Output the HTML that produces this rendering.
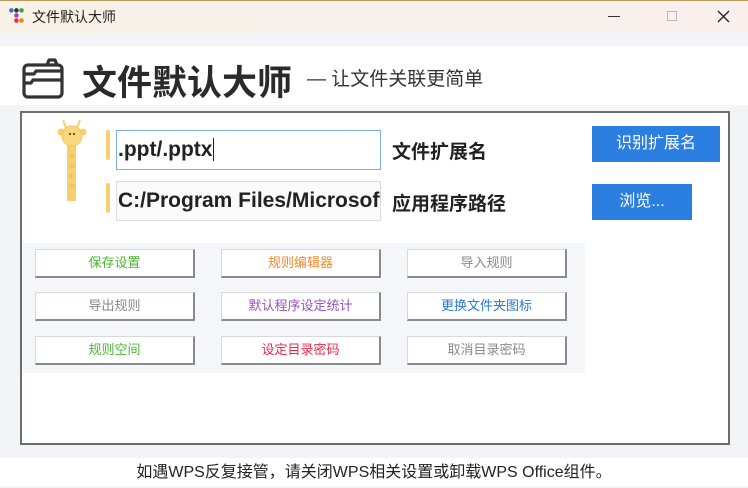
<!DOCTYPE html>
<html><head><meta charset="utf-8"><style>
*{margin:0;padding:0;box-sizing:border-box}
body{width:748px;height:486px;overflow:hidden;position:relative;background:#f3f4f8;font-family:"Liberation Sans","Noto Sans CJK SC",sans-serif}
.abs{position:absolute}
.tb{left:0;top:0;width:748px;height:34px;background:linear-gradient(90deg,#f7f1e8,#f9f0ee);border-top:1px solid #b89a5a}
.hd{left:0;top:46px;width:748px;height:59px;background:#fff}
.box{left:20px;top:111px;width:710px;height:334px;background:#fff;border:2px solid #6d6d6d}
.panel{left:23px;top:243px;width:562px;height:130px;background:#f5f6f9}
.btn{position:absolute;width:160px;height:29px;background:#fff;border:1px solid #d8d8d8;border-right:2px solid #8a8a8a;border-bottom:2px solid #8a8a8a;font-size:13px;text-align:center;line-height:26px}
.inp{position:absolute;left:116px;width:265px;height:40px;border:1px solid #dcdcdc;background:#fafafa;font-size:21px;font-weight:bold;color:#222;line-height:38px;padding-left:1px;overflow:hidden;white-space:nowrap}
.lab{position:absolute;left:392px;font-size:19px;font-weight:bold;color:#222}
.bb{position:absolute;background:#2b7fe0;color:#fff;font-size:16px;text-align:center;line-height:36px;height:36px}
.bar{position:absolute;left:106px;width:4px;height:30px;background:#f7cf70;border-radius:2px}
.bt{left:0;top:458px;width:748px;height:28px;background:#fff;font-size:16px;color:#222;text-align:center;line-height:30px}
</style></head><body>
<div class="abs tb"></div>
<svg class="abs" style="left:8px;top:7px" width="18" height="18" viewBox="0 0 16 16">
<circle cx="3" cy="3" r="2" fill="#3a6fd8"/><circle cx="7.5" cy="3" r="2" fill="#333"/><circle cx="12" cy="3" r="2" fill="#2aa84a"/>
<circle cx="7.5" cy="7.5" r="2" fill="#a040d0"/><circle cx="7.5" cy="12" r="2" fill="#e03040"/><circle cx="12" cy="12" r="2" fill="#f08020"/></svg>
<div class="abs" style="left:32px;top:7px;font-size:14px;color:#222">文件默认大师</div>
<div class="abs" style="left:608px;top:16px;width:12px;height:1px;background:#333"></div>
<div class="abs" style="left:667px;top:11px;width:10px;height:10px;border:1px solid #bbb"></div>
<svg class="abs" style="left:717px;top:10px" width="13" height="13"><path d="M1 1L12 12M12 1L1 12" stroke="#222" stroke-width="1.3"/></svg>
<div class="abs hd"></div>
<svg class="abs" style="left:21px;top:57px" width="44" height="42" viewBox="0 0 44 42">
<g fill="none" stroke="#333" stroke-width="3.2" stroke-linejoin="round">
<rect x="3" y="8" width="38" height="32" rx="4"/>
<path d="M3 17h10l2-3h26M3 26h7l2-3h29M26 8l2-5h6l2 5"/></g></svg>
<div class="abs" style="left:82px;top:55px;font-size:35px;font-weight:bold;color:#2a2a2a">文件默认大师</div>
<div class="abs" style="left:307px;top:64px;font-size:19px;color:#333">— 让文件关联更简单</div>
<div class="abs box"></div>
<svg class="abs" style="left:56px;top:118px" width="32" height="85" viewBox="0 0 32 85">
<path d="M10 10L7 2M21 10L24 2" stroke="#f7cf70" stroke-width="2"/>
<rect x="11" y="25" width="9" height="58" fill="#f7cf70"/>
<circle cx="5" cy="14" r="3.5" fill="#f7cf70"/><circle cx="27" cy="14" r="3.5" fill="#f7cf70"/>
<circle cx="16" cy="18" r="10" fill="#f9d77e" stroke="#f3c257"/>
<circle cx="14" cy="16" r="1" fill="#333"/><circle cx="18" cy="16" r="1" fill="#333"/>
<g fill="#f3c257"><circle cx="15.5" cy="38" r="2"/><circle cx="15.5" cy="48" r="2"/><circle cx="15.5" cy="58" r="2"/><circle cx="15.5" cy="68" r="2"/></g></svg>
<div class="bar" style="top:130px"></div>
<div class="bar" style="top:183px"></div>
<div class="inp" style="top:130px;border-color:#7fb0e4;background:#fff">.ppt/.pptx<span style="border-left:1px solid #222;margin-left:1px"></span></div>
<div class="inp" style="top:181px">C:/Program Files/Microsoft</div>
<div class="lab" style="top:137px">文件扩展名</div>
<div class="lab" style="top:189px">应用程序路径</div>
<div class="bb" style="left:592px;top:126px;width:128px">识别扩展名</div>
<div class="bb" style="left:592px;top:184px;width:100px">浏览...</div>
<div class="abs panel"></div>
<div class="btn" style="left:35px;top:249px;color:#4cb830">保存设置</div>
<div class="btn" style="left:221px;top:249px;color:#f08a30">规则编辑器</div>
<div class="btn" style="left:407px;top:249px;color:#888">导入规则</div>
<div class="btn" style="left:35px;top:292px;color:#888">导出规则</div>
<div class="btn" style="left:221px;top:292px;color:#9b4fc8">默认程序设定统计</div>
<div class="btn" style="left:407px;top:292px;color:#2a78d8">更换文件夹图标</div>
<div class="btn" style="left:35px;top:336px;color:#4cb830">规则空间</div>
<div class="btn" style="left:221px;top:336px;color:#e8284a">设定目录密码</div>
<div class="btn" style="left:407px;top:336px;color:#888">取消目录密码</div>
<div class="abs bt">如遇WPS反复接管，请关闭WPS相关设置或卸载WPS Office组件。</div>
</body></html>
